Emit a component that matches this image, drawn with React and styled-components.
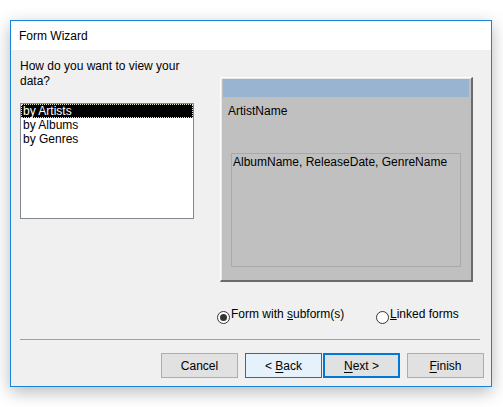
import React from 'react';
import styled, { createGlobalStyle } from 'styled-components';

const GlobalStyle = createGlobalStyle`
  html, body {
    margin: 0;
    padding: 0;
    background: #fff;
  }
  body {
    font-family: "Liberation Sans", Arial, sans-serif;
    font-size: 12px;
    color: #000;
  }
`;

const Page = styled.div`
  width: 503px;
  height: 407px;
  padding: 20px 0 0 10px;
  box-sizing: border-box;
`;

const Window = styled.div`
  width: 482px;
  height: 367px;
  box-sizing: border-box;
  border: 1px solid #1883d7;
  background: #f0f0f0;
  display: flex;
  flex-direction: column;
  box-shadow: 0 5px 16px rgba(0, 0, 0, 0.28);
`;

const TitleBar = styled.div`
  height: 29px;
  background: #fff;
  display: flex;
  align-items: center;
  padding-left: 8px;
  font-size: 12px;
`;

const Body = styled.div`
  flex: 1;
  display: flex;
  flex-direction: column;
  padding: 9px 11px 8px 9px;
`;

const TopRow = styled.div`
  display: flex;
  gap: 26px;
`;

const LeftColumn = styled.div`
  width: 174px;
  display: flex;
  flex-direction: column;
`;

const Prompt = styled.p`
  margin: 0;
  line-height: 15px;
`;

const ListBox = styled.ul`
  list-style: none;
  margin: 14px 0 0;
  padding: 0;
  height: 116px;
  box-sizing: border-box;
  border: 1px solid #828790;
  background: #fff;
`;

const ListItem = styled.li`
  height: 14px;
  line-height: 14px;
  padding-left: 2px;
  background: ${({ selected }) => (selected ? '#000' : 'transparent')};
  color: ${({ selected }) => (selected ? '#fff' : '#000')};
  outline: ${({ selected }) => (selected ? '1px dotted #e8e8c8' : 'none')};
  outline-offset: -1px;
`;

const Preview = styled.div`
  margin-top: 18px;
  width: 253px;
  height: 205px;
  box-sizing: border-box;
  background: #c0c0c0;
  border-style: solid;
  border-width: 1px 2px 2px 1px;
  border-color: #fff #6b6b6b #6b6b6b #fff;
  box-shadow: inset 1px 1px 0 #e6e6e6;
  display: flex;
  flex-direction: column;
`;

const HeaderBar = styled.div`
  height: 18px;
  margin: 1px 2px 0 2px;
  background: #99b4d1;
`;

const FieldLabel = styled.div`
  margin: 7px 0 0 7px;
  line-height: 14px;
`;

const SubformBox = styled.div`
  margin: 35px 0 0 10px;
  width: 230px;
  height: 114px;
  box-sizing: border-box;
  border: 1px solid #a9a9a9;
  padding: 1px 0 0 1px;
  line-height: 14px;
`;

const RadioRow = styled.div`
  display: flex;
  margin: 26px 0 0 197px;
  height: 16px;
`;

const RadioOption = styled.label`
  display: flex;
  align-items: flex-start;
  width: ${({ width }) => width}px;
  line-height: 13px;
`;

const RadioCircle = styled.span`
  width: 13px;
  height: 13px;
  margin-top: 3px;
  box-sizing: border-box;
  border: 1px solid #333;
  border-radius: 50%;
  background: #fff;
  display: flex;
  align-items: center;
  justify-content: center;
  flex-shrink: 0;
  margin-right: 1px;

  &::after {
    content: '';
    width: 7px;
    height: 7px;
    border-radius: 50%;
    background: ${({ checked }) => (checked ? '#333' : 'transparent')};
  }
`;

const Separator = styled.hr`
  margin: 15px 0 0 0;
  border: none;
  height: 1px;
  background: #a0a0a0;
`;

const ButtonRow = styled.div`
  display: flex;
  justify-content: flex-end;
  margin: 13px -4px 0 0;
`;

const Button = styled.button`
  width: 77px;
  height: 25px;
  margin-left: ${({ tight }) => (tight ? '1px' : '7px')};
  box-sizing: border-box;
  font-family: "Liberation Sans", Arial, sans-serif;
  font-size: 12px;
  color: #000;
  padding: 0;
  background: ${({ hot }) => (hot ? '#e5f1fb' : '#e1e1e1')};
  border: ${({ hot, primary }) =>
    primary ? '2px solid #0078d7' : hot ? '1px solid #0078d7' : '1px solid #adadad'};

  u {
    text-decoration: underline;
    text-underline-offset: 2px;
  }
`;

const App = () => {
  return (
    <Page>
      <GlobalStyle />
      <Window>
        <TitleBar>Form Wizard</TitleBar>
        <Body>
          <TopRow>
            <LeftColumn>
              <Prompt>
                How do you want to view your
                <br />
                data?
              </Prompt>
              <ListBox>
                <ListItem selected>by Artists</ListItem>
                <ListItem>by Albums</ListItem>
                <ListItem>by Genres</ListItem>
              </ListBox>
            </LeftColumn>
            <Preview>
              <HeaderBar />
              <FieldLabel>ArtistName</FieldLabel>
              <SubformBox>AlbumName, ReleaseDate, GenreName</SubformBox>
            </Preview>
          </TopRow>
          <RadioRow>
            <RadioOption width={159}>
              <RadioCircle checked />
              <span>
                Form with <u>s</u>ubform(s)
              </span>
            </RadioOption>
            <RadioOption width={100}>
              <RadioCircle />
              <span>
                <u>L</u>inked forms
              </span>
            </RadioOption>
          </RadioRow>
          <Separator />
          <ButtonRow>
            <Button>Cancel</Button>
            <Button hot>
              &lt; <u>B</u>ack
            </Button>
            <Button primary tight>
              <u>N</u>ext &gt;
            </Button>
            <Button>
              <u>F</u>inish
            </Button>
          </ButtonRow>
        </Body>
      </Window>
    </Page>
  );
};

export default App;
